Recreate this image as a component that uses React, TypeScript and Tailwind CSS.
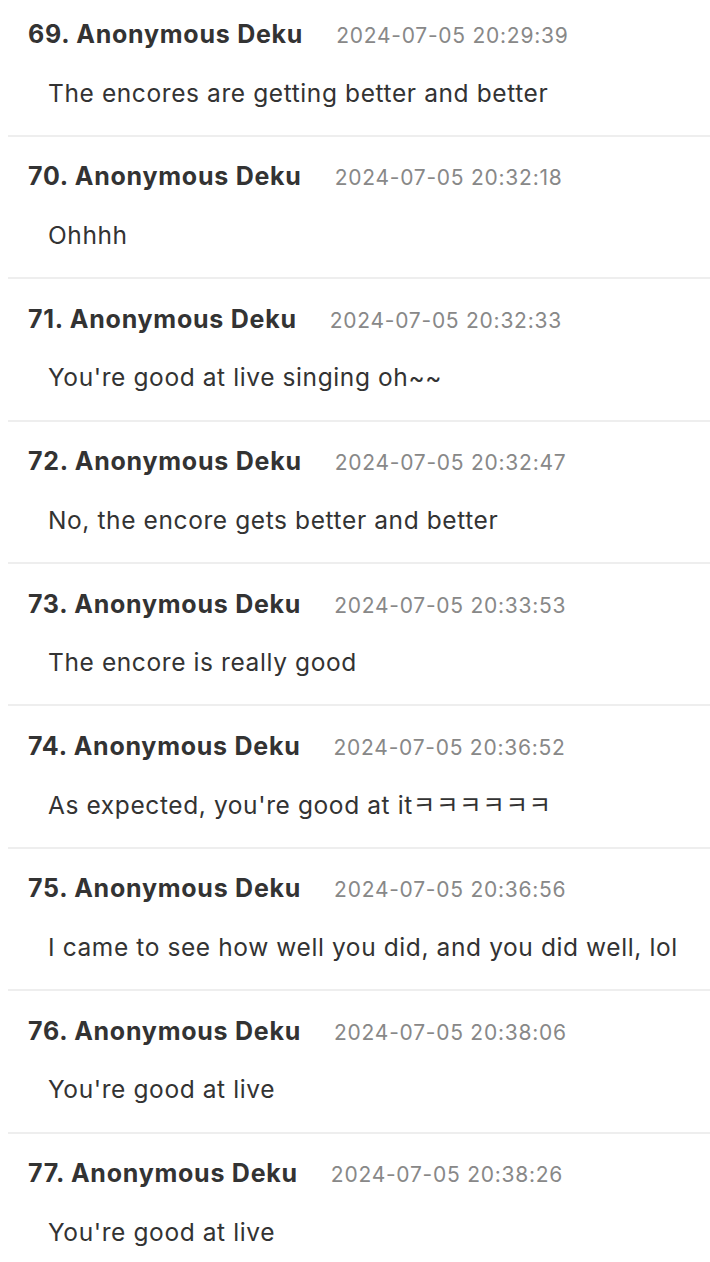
import React from "react";

const items = [
  { n: 69, t: "2024-07-05 20:29:39", b: "The encores are getting better and better" },
  { n: 70, t: "2024-07-05 20:32:18", b: "Ohhhh" },
  { n: 71, t: "2024-07-05 20:32:33", b: "You're good at live singing oh~~" },
  { n: 72, t: "2024-07-05 20:32:47", b: "No, the encore gets better and better" },
  { n: 73, t: "2024-07-05 20:33:53", b: "The encore is really good" },
  { n: 74, t: "2024-07-05 20:36:52", b: "As expected, you're good at itㅋㅋㅋㅋㅋㅋ" },
  { n: 75, t: "2024-07-05 20:36:56", b: "I came to see how well you did, and you did well, lol" },
  { n: 76, t: "2024-07-05 20:38:06", b: "You're good at live" },
  { n: 77, t: "2024-07-05 20:38:26", b: "You're good at live" },
];

export default function App() {
  return (
    <div className="bg-white w-[710px] h-[1262px] overflow-hidden" style={{ fontFamily: "Inter, 'Noto Sans CJK KR', sans-serif" }}>
      <div className="pl-2 -mt-[5.6px]">
        {items.map((it, i) => (
          <div key={it.n} className={i < items.length - 1 ? "border-b-2 border-[#eeeeee]" : ""}>
            <div className="h-[140.4px] flex flex-col">
              <div className="flex items-baseline pl-5 pt-[24.6px] leading-[31px] whitespace-nowrap">
                <span className="text-[25px] font-bold text-[#333333] tracking-[0.75px]">{it.n}. Anonymous Deku</span>
                <span className="ml-[33px] text-[21px] text-[#888888] tracking-[0.75px]">{it.t}</span>
              </div>
              <div className="pl-10 mt-[26.6px] text-[24.5px] leading-[31px] text-[#333333] tracking-[0.6px] whitespace-nowrap">{it.b}</div>
            </div>
          </div>
        ))}
      </div>
    </div>
  );
}
